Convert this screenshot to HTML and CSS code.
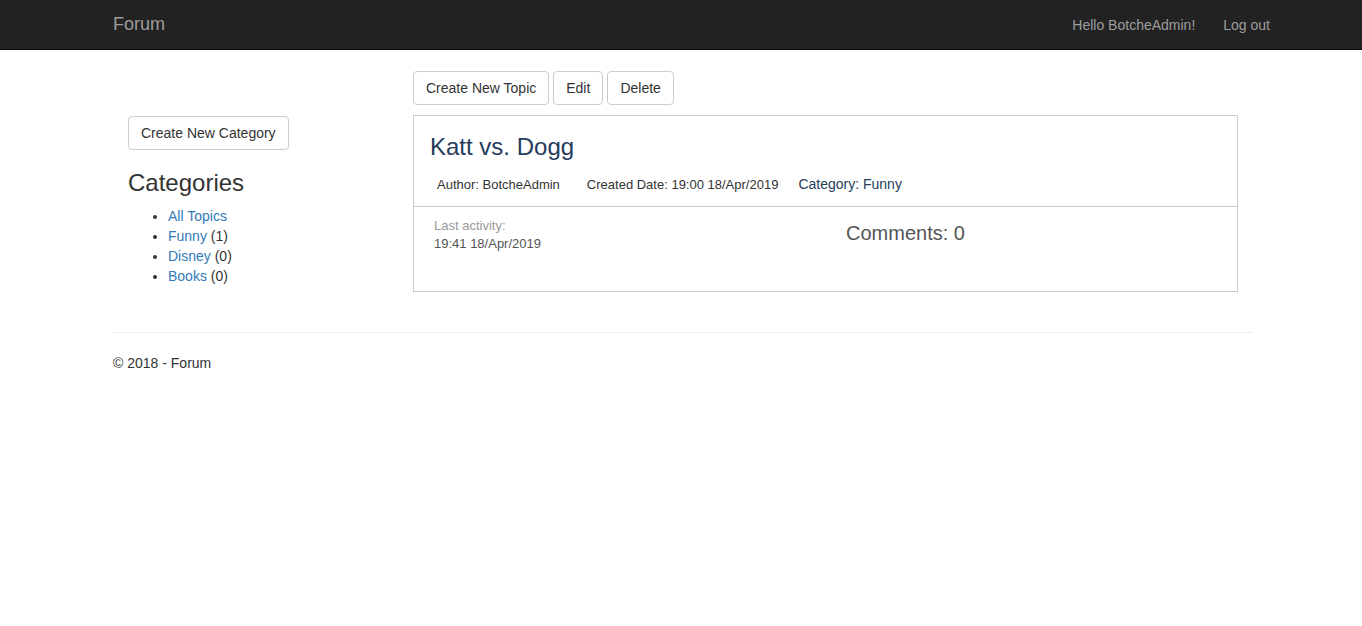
FILE: index.html
```html
<!DOCTYPE html>
<html>
<head>
<meta charset="utf-8">
<title>Forum</title>
<link rel="stylesheet" href="styles.css">
</head>
<body>
<header class="navbar">
  <div class="container nav-inner">
    <a class="brand" href="#">Forum</a>
    <ul class="nav-right">
      <li><a href="#">Hello BotcheAdmin!</a></li>
      <li><a href="#">Log out</a></li>
    </ul>
  </div>
</header>
<div class="container body-content">
  <div class="columns">
    <aside class="col-side">
      <a class="btn" href="#">Create New Category</a>
      <h3 class="side-title">Categories</h3>
      <ul class="cat-list">
        <li><a href="#">All Topics</a></li>
        <li><a href="#">Funny</a> (1)</li>
        <li><a href="#">Disney</a> (0)</li>
        <li><a href="#">Books</a> (0)</li>
      </ul>
    </aside>
    <main class="col-main">
      <div class="toolbar">
        <a class="btn" href="#">Create New Topic</a>
        <a class="btn" href="#">Edit</a>
        <a class="btn" href="#">Delete</a>
      </div>
      <div class="topic">
        <div class="topic-head">
          <h3 class="topic-title">Katt vs. Dogg</h3>
          <div class="meta">
            <span class="meta-author">Author: BotcheAdmin</span>
            <span class="meta-date">Created Date: 19:00 18/Apr/2019</span>
            <span class="meta-cat">Category: Funny</span>
          </div>
        </div>
        <div class="topic-body">
          <div class="activity">
            <div class="act-label">Last activity:</div>
            <div class="act-date">19:41 18/Apr/2019</div>
          </div>
          <div class="comments">Comments: 0</div>
        </div>
      </div>
    </main>
  </div>
  <hr class="rule">
  <footer class="footer">
    <p>&copy; 2018 - Forum</p>
  </footer>
</div>
</body>
</html>
```

FILE: styles.css
```css
* { box-sizing: border-box; }
html, body { margin: 0; padding: 0; }
body {
  font-family: "Liberation Sans", Arial, Helvetica, sans-serif;
  font-size: 14px;
  line-height: 20px;
  color: #333;
  background: #fff;
}
a { color: #337ab7; text-decoration: none; }

.container {
  width: 1170px;
  margin: 0 0 0 calc(50% - 583px);
  padding: 0 15px;
}

.navbar {
  background: #222;
  border-bottom: 1px solid #080808;
  height: 50px;
}
.nav-inner {
  display: flex;
  justify-content: space-between;
  align-items: center;
  height: 49px;
}
.brand {
  color: #9d9d9d;
  font-size: 18px;
  line-height: 20px;
  margin-top: -1px;
}
.nav-right {
  list-style: none;
  margin: 0 -31px 0 0;
  padding: 0;
  display: flex;
}
.nav-right a {
  display: block;
  color: #9d9d9d;
  padding: 0 14px;
  line-height: 20px;
}

.body-content { padding-top: 21px; }
.columns { display: flex; }
.col-side { width: 285px; padding: 45px 15px 0 15px; }
.col-main { width: 855px; padding: 0 15px; }

.btn {
  display: inline-block;
  padding: 6px 12px;
  font-size: 14px;
  line-height: 20px;
  color: #333;
  background: #fff;
  border: 1px solid #ccc;
  border-radius: 4px;
}

.side-title {
  font-size: 24px;
  font-weight: 500;
  line-height: 26px;
  margin: 20px 0 10px;
  color: #333;
}
.cat-list {
  margin: 0 0 10px;
  padding-left: 40px;
}
.cat-list li { line-height: 20px; }

.toolbar {
  display: flex;
  gap: 4px;
  margin-bottom: 10px;
}

.topic {
  border: 1px solid #ccc;
}
.topic-head {
  padding: 18px 16px 11px;
  border-bottom: 1px solid #ccc;
}
.topic-title {
  margin: 0 0 15px;
  font-size: 24px;
  font-weight: 500;
  line-height: 26px;
  color: #253c5c;
}
.meta {
  display: flex;
  align-items: center;
  padding-left: 7px;
  font-size: 13px;
  line-height: 20px;
}
.meta-author { color: #333; margin-right: 27px; }
.meta-date { color: #333; margin-right: 20px; }
.meta-cat { color: #253c5c; font-size: 14px; margin-top: -2px; }

.topic-body {
  display: flex;
  padding: 10px 20px 0;
  height: 84px;
}
.activity { width: 412px; font-size: 13px; line-height: 18px; }
.act-label { color: #999; }
.act-date { color: #555; }
.comments {
  font-size: 20px;
  line-height: 22px;
  color: #555;
  margin-top: 5px;
}

.rule {
  border: 0;
  border-top: 1px solid #eee;
  margin: 36px 0 20px;
}
.footer p { margin: 0 0 10px; }
```
